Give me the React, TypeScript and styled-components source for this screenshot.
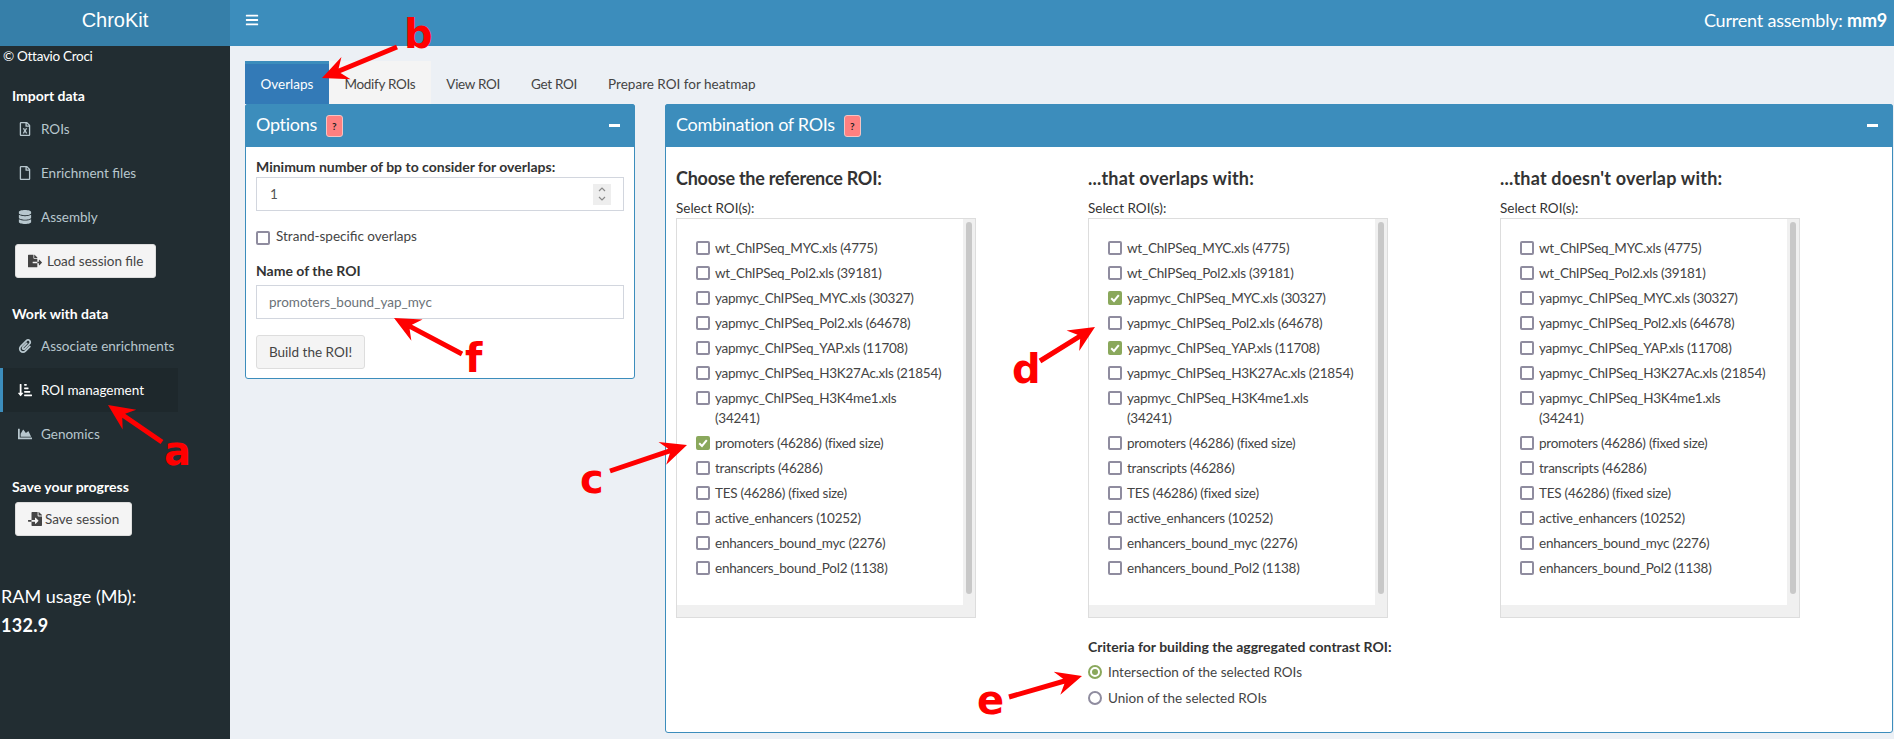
import styled, { createGlobalStyle } from 'styled-components';
import type { ReactNode } from 'react';
import {
  FaBars, FaChartArea, FaDatabase, FaFileExport, FaFileImport, FaPaperclip,
  FaRegFile, FaRegFileExcel, FaSortAmountDownAlt,
} from 'react-icons/fa';

const GlobalStyle = createGlobalStyle`
  * { box-sizing: border-box; }
  html, body { margin: 0; padding: 0; height: 739px; overflow: hidden; }
  body {
    font-family: Lato, "Noto Sans", sans-serif;
    font-size: 13.5px;
    line-height: 20px;
    color: #333;
    background: #ecf0f5;
  }
`;

const roiNames = [
  'wt_ChIPSeq_MYC.xls (4775)',
  'wt_ChIPSeq_Pol2.xls (39181)',
  'yapmyc_ChIPSeq_MYC.xls (30327)',
  'yapmyc_ChIPSeq_Pol2.xls (64678)',
  'yapmyc_ChIPSeq_YAP.xls (11708)',
  'yapmyc_ChIPSeq_H3K27Ac.xls (21854)',
  'yapmyc_ChIPSeq_H3K4me1.xls\n(34241)',
  'promoters (46286) (fixed size)',
  'transcripts (46286)',
  'TES (46286) (fixed size)',
  'active_enhancers (10252)',
  'enhancers_bound_myc (2276)',
  'enhancers_bound_Pol2 (1138)',
];

const tabs = ['Overlaps', 'Modify ROIs', 'View ROI', 'Get ROI', 'Prepare ROI for heatmap'];

const arrows = [
  { tail: [162, 442], tip: [108, 405] },
  { tail: [397, 47], tip: [322, 78] },
  { tail: [610, 471], tip: [687, 445] },
  { tail: [1040, 361], tip: [1095, 327] },
  { tail: [1009, 697], tip: [1082, 676] },
  { tail: [462, 354], tip: [394, 318] },
];

const letters = [
  { text: 'a', x: 164, y: 427 },
  { text: 'b', x: 404, y: 10 },
  { text: 'c', x: 580, y: 455 },
  { text: 'd', x: 1012, y: 345 },
  { text: 'e', x: 977, y: 676 },
  { text: 'f', x: 465, y: 334 },
];

const arrowPoints = (tail: number[], tip: number[]) => {
  const dx = tip[0] - tail[0];
  const dy = tip[1] - tail[1];
  const len = Math.hypot(dx, dy);
  const ux = dx / len;
  const uy = dy / len;
  const at = (along: number, side: number) =>
    `${tip[0] - ux * along - uy * side},${tip[1] - uy * along + ux * side}`;
  return [
    at(0, 0), at(26, 12), at(19, 2.5), at(len, 2.5),
    at(len, -2.5), at(19, -2.5), at(26, -12),
  ].join(' ');
};

const RoiColumn = ({ title, checked, spacing }: { title: string; checked: number[]; spacing: number }) => (
  <Column>
    <ColumnTitle $spacing={spacing}>{title}</ColumnTitle>
    <FieldCaption>Select ROI(s):</FieldCaption>
    <ListBox>
      <ListBody>
        {roiNames.map((name, i) => (
          <RoiRow key={name}>
            <CheckBox $checked={checked.includes(i)}>
              {checked.includes(i) && <CheckMark />}
            </CheckBox>
            <RoiName>{name}</RoiName>
          </RoiRow>
        ))}
      </ListBody>
      <VerticalTrack><Thumb /></VerticalTrack>
    </ListBox>
  </Column>
);

const CheckMark = () => (
  <svg width="10" height="10" viewBox="0 0 10 10">
    <path d="M1.2 5.2 L4 8 L8.8 2.2" fill="none" stroke="#fff" strokeWidth="2" />
  </svg>
);

const MenuEntry = ({ icon, children, active }: { icon: ReactNode; children: ReactNode; active?: boolean }) => (
  <MenuItem $active={active}>
    <MenuIcon>{icon}</MenuIcon>
    {children}
  </MenuItem>
);

const Box = ({ title, children }: { title: string; children: ReactNode }) => (
  <BoxFrame>
    <BoxHeader>
      <BoxTitle>{title}</BoxTitle>
      <HelpBadge>?</HelpBadge>
      <Collapse />
    </BoxHeader>
    {children}
  </BoxFrame>
);

export default function App() {
  return (
    <Page>
      <GlobalStyle />
      <TopBar>
        <Logo>ChroKit</Logo>
        <NavBar>
          <FaBars size={14} />
          <Assembly>Current assembly: <b>mm9</b></Assembly>
        </NavBar>
      </TopBar>
      <Body>
        <Sidebar>
          <Copyright>© Ottavio Croci</Copyright>
          <SideHeading $top={20}>Import data</SideHeading>
          <Menu>
            <MenuEntry icon={<FaRegFileExcel size={14} />}>ROIs</MenuEntry>
            <MenuEntry icon={<FaRegFile size={14} />}>Enrichment files</MenuEntry>
            <MenuEntry icon={<FaDatabase size={14} />}>Assembly</MenuEntry>
          </Menu>
          <SideButton $gap={5}><FaFileExport size={14} />Load session file</SideButton>
          <SideHeading $top={26}>Work with data</SideHeading>
          <Menu $flush>
            <MenuEntry icon={<FaPaperclip size={14} />}>Associate enrichments</MenuEntry>
            <MenuEntry active icon={<FaSortAmountDownAlt size={14} />}>ROI management</MenuEntry>
            <MenuEntry icon={<FaChartArea size={14} />}>Genomics</MenuEntry>
          </Menu>
          <SideHeading $top={21}>Save your progress</SideHeading>
          <SideButton $gap={3}><FaFileImport size={14} />Save session</SideButton>
          <RamLabel>RAM usage (Mb):</RamLabel>
          <RamValue>132.9</RamValue>
        </Sidebar>
        <Content>
          <TabBar>
            {tabs.map((tab, i) => (
              <Tab key={tab} $active={i === 0} $hover={i === 1}>{tab}</Tab>
            ))}
          </TabBar>
          <Panels>
            <Box title="Options">
              <OptionsBody>
                <BoldLabel>Minimum number of bp to consider for overlaps:</BoldLabel>
                <NumberField>
                  1
                  <Spinner>
                    <svg width="10" height="18" viewBox="0 0 10 18">
                      <path d="M2 6 L5 3 L8 6 M2 12 L5 15 L8 12" fill="none" stroke="#8a8a8a" strokeWidth="1.2" />
                    </svg>
                  </Spinner>
                </NumberField>
                <StrandRow>
                  <CheckBox />
                  Strand-specific overlaps
                </StrandRow>
                <NameLabel>Name of the ROI</NameLabel>
                <TextField readOnly value="promoters_bound_yap_myc" />
                <BuildButton>Build the ROI!</BuildButton>
              </OptionsBody>
            </Box>
            <Box title="Combination of ROIs">
              <CombinationBody>
                <RoiColumn title="Choose the reference ROI:" checked={[7]} spacing={-0.25} />
                <RoiColumn title="...that overlaps with:" checked={[2, 4]} spacing={0.2} />
                <RoiColumn title="...that doesn't overlap with:" checked={[]} spacing={0.2} />
                <Criteria>
                  <BoldLabel>Criteria for building the aggregated contrast ROI:</BoldLabel>
                  <RadioRow $top={5}><Radio $on />Intersection of the selected ROIs</RadioRow>
                  <RadioRow $top={6}><Radio />Union of the selected ROIs</RadioRow>
                </Criteria>
              </CombinationBody>
            </Box>
          </Panels>
        </Content>
      </Body>
      <AnnotationLayer width="1894" height="739" viewBox="0 0 1894 739">
        {arrows.map(a => (
          <polygon key={a.tail.join()} points={arrowPoints(a.tail, a.tip)} fill="#ff0000" />
        ))}
      </AnnotationLayer>
      {letters.map(l => (
        <Letter key={l.text} $x={l.x} $y={l.y}>{l.text}</Letter>
      ))}
    </Page>
  );
}

const Page = styled.div`
  position: relative;
  width: 1894px;
  height: 739px;
  overflow: hidden;
`;

const TopBar = styled.header`
  display: flex;
  height: 46px;
  color: #fff;
`;

const Logo = styled.div`
  width: 230px;
  background: #367fa9;
  font-family: "Liberation Sans", Arial, sans-serif;
  font-size: 20px;
  line-height: 40px;
  text-align: center;
`;

const NavBar = styled.div`
  flex: 1;
  background: #3c8dbc;
  display: flex;
  align-items: center;
  justify-content: space-between;
  padding: 0 7px 6px 15px;
`;

const Assembly = styled.span`
  font-size: 18px;
  letter-spacing: -0.2px;
`;

const Body = styled.div`
  display: flex;
  height: 693px;
`;

const Sidebar = styled.aside`
  width: 230px;
  background: #222d32;
  color: #fff;
`;

const Copyright = styled.div`
  padding-left: 3px;
  letter-spacing: -0.3px;
`;

const SideHeading = styled.div<{ $top: number }>`
  margin-top: ${p => p.$top}px;
  padding-left: 12px;
  font-size: 14px;
  font-weight: 700;
`;

const Menu = styled.nav<{ $flush?: boolean }>`
  margin-top: ${p => (p.$flush ? 0 : 1)}px;
`;

const MenuItem = styled.div<{ $active?: boolean }>`
  width: 178px;
  height: 44px;
  display: flex;
  align-items: center;
  padding-left: ${p => (p.$active ? 15 : 18)}px;
  border-left: ${p => (p.$active ? '3px solid #3c8dbc' : '0')};
  background: ${p => (p.$active ? '#1e282c' : 'transparent')};
  color: ${p => (p.$active ? '#fff' : '#b8c7ce')};
  white-space: nowrap;
`;

const MenuIcon = styled.span`
  width: 23px;
  display: flex;
  align-items: center;
`;

const SideButton = styled.button<{ $gap: number }>`
  display: flex;
  align-items: center;
  gap: ${p => p.$gap}px;
  height: 34px;
  margin: 5px 0 0 15px;
  padding: 0 12px;
  background: #f4f4f4;
  border: 1px solid #ddd;
  border-radius: 3px;
  color: #444;
  font: inherit;
`;

const RamLabel = styled.div`
  margin-top: 48px;
  padding-left: 1px;
  font-size: 18px;
  line-height: 25px;
`;

const RamValue = styled.div`
  margin-top: 4px;
  padding-left: 1px;
  font-size: 18px;
  line-height: 25px;
  font-weight: 700;
  letter-spacing: 0.3px;
`;

const Content = styled.main`
  flex: 1;
  padding: 15px 0 0 15px;
`;

const TabBar = styled.div`
  display: flex;
  height: 43px;
`;

const Tab = styled.div<{ $active?: boolean; $hover?: boolean }>`
  padding: 0 15.5px;
  letter-spacing: -0.3px;
  color: ${p => (p.$active ? '#fff' : '#444')};
  background: ${p => (p.$active ? '#337ab7' : p.$hover ? '#f4f4f4' : 'transparent')};
  border-top: 3px solid ${p => (p.$active ? '#3c8dbc' : p.$hover ? '#f4f4f4' : 'transparent')};
  line-height: 40px;
  &:first-child,
  &:last-child {
    letter-spacing: 0;
  }
`;

const Panels = styled.div`
  display: grid;
  grid-template-columns: 390px 1228px;
  gap: 30px;
  align-items: start;
`;

const BoxFrame = styled.section`
  background: #fff;
  border: 1px solid #3c8dbc;
  border-radius: 3px;
`;

const BoxHeader = styled.div`
  display: flex;
  align-items: center;
  height: 43px;
  margin: -1px -1px 0;
  padding: 0 15px 0 11px;
  background: #3c8dbc;
  border-radius: 3px 3px 0 0;
  color: #fff;
`;

const BoxTitle = styled.h3`
  margin: 0 0 3px;
  font-size: 18px;
  font-weight: 400;
  letter-spacing: -0.3px;
`;

const HelpBadge = styled.span`
  width: 17px;
  height: 22px;
  margin-left: 9px;
  background: #ff8080;
  border: 1px solid #f4c4c4;
  border-radius: 3px;
  color: #222;
  font-size: 10px;
  font-weight: 700;
  line-height: 20px;
  text-align: center;
`;

const Collapse = styled.span`
  width: 11px;
  height: 3px;
  margin-left: auto;
  background: #fff;
`;

const OptionsBody = styled.div`
  padding: 10px 10px 9px;
`;

const BoldLabel = styled.div`
  font-size: 14px;
  font-weight: 700;
`;

const NumberField = styled.div`
  display: flex;
  align-items: center;
  justify-content: space-between;
  height: 34px;
  padding: 0 12px 0 13px;
  border: 1px solid #d2d6de;
  color: #555;
`;

const Spinner = styled.span`
  display: flex;
  align-items: center;
  justify-content: center;
  width: 18px;
  height: 21px;
  background: #eee;
`;

const StrandRow = styled.div`
  display: flex;
  align-items: center;
  gap: 6px;
  margin-top: 15px;
  color: #444;
`;

const NameLabel = styled(BoldLabel)`
  margin: 15px 0 4px;
`;

const TextField = styled.input`
  display: block;
  width: 100%;
  height: 34px;
  padding: 0 12px;
  border: 1px solid #d2d6de;
  outline: none;
  color: #6b7278;
  font: inherit;
`;

const BuildButton = styled.button`
  display: block;
  height: 34px;
  margin-top: 16px;
  padding: 0 12px;
  background: #f4f4f4;
  border: 1px solid #ddd;
  border-radius: 3px;
  color: #444;
  font: inherit;
`;

const CombinationBody = styled.div`
  display: grid;
  grid-template-columns: repeat(3, 412px);
  margin-left: -5px;
  padding: 21px 0 24px 15px;
`;

const Column = styled.div``;

const ColumnTitle = styled.h4<{ $spacing: number }>`
  margin: 0 0 10px;
  font-size: 18px;
  font-weight: 700;
  line-height: 20px;
  letter-spacing: ${p => p.$spacing}px;
`;

const FieldCaption = styled.div``;

const ListBox = styled.div`
  display: flex;
  width: 300px;
  height: 400px;
  background: #f0f0f0;
  border: 1px solid #ddd;
`;

const ListBody = styled.div`
  flex: 1;
  height: 386px;
  padding: 19px 0 0 19px;
  background: #fff;
`;

const RoiRow = styled.div`
  display: flex;
  gap: 5px;
  margin-bottom: 5px;
`;

const CheckBox = styled.span<{ $checked?: boolean }>`
  flex: none;
  display: flex;
  align-items: center;
  justify-content: center;
  width: 14px;
  height: 14px;
  margin-top: 3px;
  background: ${p => (p.$checked ? '#8aa85c' : '#fff')};
  border: 2px solid ${p => (p.$checked ? '#8aa85c' : '#8f8c9f')};
  border-radius: 2px;
`;

const RoiName = styled.span`
  white-space: pre;
  color: #444;
  letter-spacing: -0.25px;
`;

const VerticalTrack = styled.div`
  width: 12px;
  padding: 3px 3px 0;
`;

const Thumb = styled.div`
  width: 6px;
  height: 372px;
  background: #c8c8c8;
  border-radius: 3px;
`;

const Criteria = styled.div`
  grid-column: 2;
  margin-top: 19px;
`;

const RadioRow = styled.div<{ $top: number }>`
  display: flex;
  align-items: center;
  gap: 6px;
  margin-top: ${p => p.$top}px;
  color: #444;
`;

const Radio = styled.span<{ $on?: boolean }>`
  display: flex;
  align-items: center;
  justify-content: center;
  width: 14px;
  height: 14px;
  border: 2px solid ${p => (p.$on ? '#8aa85c' : '#8f8c9f')};
  border-radius: 50%;
  &::after {
    content: '';
    width: 6px;
    height: 6px;
    border-radius: 50%;
    background: ${p => (p.$on ? '#8aa85c' : 'transparent')};
  }
`;

const AnnotationLayer = styled.svg`
  position: absolute;
  left: 0;
  top: 0;
  pointer-events: none;
`;

const Letter = styled.span<{ $x: number; $y: number }>`
  position: absolute;
  left: ${p => p.$x}px;
  top: ${p => p.$y}px;
  color: #ff0000;
  font-family: "DejaVu Sans", sans-serif;
  font-size: 40px;
  font-weight: 700;
  line-height: 48px;
`;
